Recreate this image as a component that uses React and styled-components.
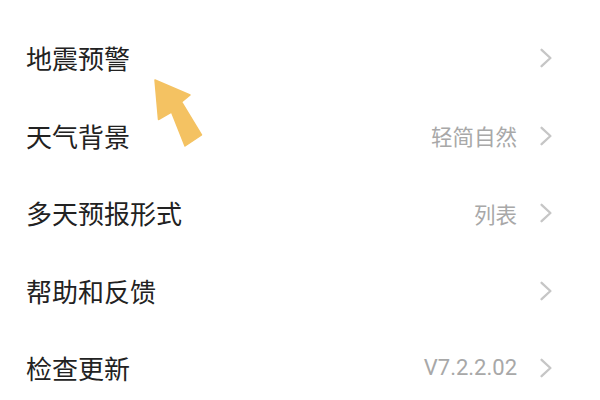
import React from "react";
import styled, { createGlobalStyle } from "styled-components";

const Global = createGlobalStyle`
  html, body { margin: 0; padding: 0; background: #ffffff; }
  body { width: 600px; height: 400px; overflow: hidden; }
`;

const Page = styled.div`
  position: relative;
  width: 600px;
  height: 400px;
  background: #ffffff;
  padding-top: 19.5px;
  box-sizing: border-box;
  font-family: "Noto Sans CJK SC", "Noto Sans", sans-serif;
`;

const List = styled.div`
  display: flex;
  flex-direction: column;
`;

const Row = styled.div`
  display: flex;
  align-items: center;
  height: 77.5px;
  padding: 0 48px 0 26px;
`;

const Label = styled.span`
  flex: 1;
  font-size: 26px;
  color: #222222;
  line-height: 1;
`;

const Value = styled.span`
  font-family: ${(p) => (p.$latin ? '"Roboto", "Noto Sans", sans-serif' : '"Noto Sans CJK SC", sans-serif')};
  font-size: ${(p) => (p.$latin ? "22px" : "21.5px")};
  color: #a8a8a8;
  margin-right: 23px;
  line-height: 1;
`;

const Chevron = styled.svg`
  width: 12px;
  height: 20px;
  flex: none;
`;

const Arrow = styled.svg`
  position: absolute;
  left: 0;
  top: 0;
  width: 600px;
  height: 400px;
  pointer-events: none;
`;

const items = [
  { label: "地震预警" },
  { label: "天气背景", value: "轻简自然" },
  { label: "多天预报形式", value: "列表" },
  { label: "帮助和反馈" },
  { label: "检查更新", value: "V7.2.2.02", latin: true },
];

export default function App() {
  return (
    <>
      <Global />
      <Page>
        <List>
          {items.map((it) => (
            <Row key={it.label}>
              <Label>{it.label}</Label>
              {it.value && <Value $latin={it.latin}>{it.value}</Value>}
              <Chevron viewBox="0 0 12 20">
                <polyline
                  points="1.6,1.8 10.4,10 1.6,18.2"
                  fill="none"
                  stroke="#c6c6c6"
                  strokeWidth="2.3"
                  strokeLinecap="round"
                  strokeLinejoin="round"
                />
              </Chevron>
            </Row>
          ))}
        </List>
        <Arrow viewBox="0 0 600 400">
          <polygon
            points="155,80 190,95 181.5,102 201.5,135 185,146 171.5,112 158.5,119.5"
            fill="#f4c262"
            stroke="#f4c262"
            strokeWidth="1.5"
            strokeLinejoin="round"
          />
        </Arrow>
      </Page>
    </>
  );
}
